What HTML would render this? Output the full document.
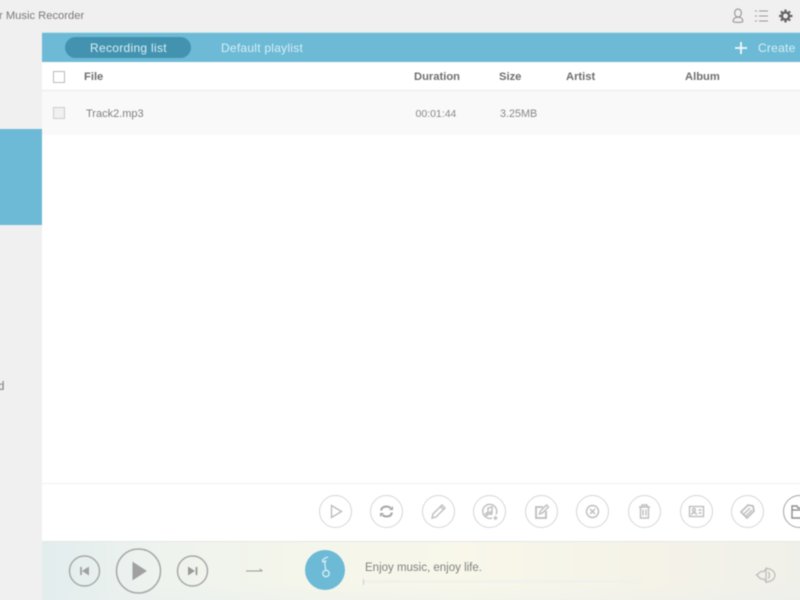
<!DOCTYPE html>
<html>
<head>
<meta charset="utf-8">
<style>
html,body{margin:0;padding:0;width:800px;height:600px;overflow:hidden;background:#fff}
body{position:relative;font-family:"Liberation Sans",sans-serif;color:#777}
#w{position:absolute;left:-10px;top:-10px;width:820px;height:620px;filter:blur(.45px)}
#i{position:absolute;left:10px;top:10px;width:800px;height:600px}
.a{position:absolute;white-space:nowrap;line-height:14px}
.b{font-weight:bold;font-size:11.2px;color:#6e6e6e}
.c{position:absolute;top:495px;width:31px;height:31px;border:1.3px solid #d6d6d6;border-radius:50%;box-sizing:content-box}
.c svg{position:absolute;left:0;top:0;width:31px;height:31px;fill:none;stroke:#bdbdbd;stroke-width:1.4}
</style>
</head>
<body>
<div id="w"><div id="i">
<div class="a" style="left:-10px;top:-10px;width:820px;height:43px;background:#f0f0f0"></div>
<div class="a" style="left:-10px;top:33px;width:52px;height:577px;background:#f0f0f0"></div>
<div class="a" style="left:-10px;top:129px;width:52px;height:96px;background:#6cbad5"></div>
<div class="a" style="left:-1px;top:9px;font-size:11.2px;color:#7a7a7a">r Music Recorder</div>
<div class="a" style="left:-2px;top:380px;font-size:11.5px;color:#777">d</div>

<svg class="a" style="left:728px;top:6px" width="66" height="20" viewBox="0 0 66 20" fill="none">
<ellipse cx="10" cy="7" rx="3.4" ry="4" stroke="#999" stroke-width="1.2"/>
<path d="M5.2 15.500c0-3 2-4.300 4.800-4.300s4.800 1.300 4.800 4.300c0 1.200-9.600 1.200-9.600 0z" stroke="#999" stroke-width="1.200"/>
<path d="M31 5h9M31 10h9M31 15h9" stroke="#999" stroke-width="1"/>
<path d="M27 5h2M27 10h2M27 15h2" stroke="#999" stroke-width="1"/>
<circle cx="57.500" cy="10" r="3.600" stroke="#666" stroke-width="2.400"/>
<path d="M57.500 3.500v2.500M57.500 14v2.500M51 10h2.500M62 10h2.500M52.900 5.400l1.800 1.800M60.300 12.800l1.800 1.800M52.900 14.600l1.800-1.800M60.300 7.200l1.800-1.800" stroke="#666" stroke-width="2.200"/>
</svg>

<div class="a" style="left:42px;top:32px;width:768px;height:1px;background:#c4e4ee"></div>
<div class="a" style="left:42px;top:33px;width:768px;height:29px;background:#6cbad5"></div>
<div class="a" style="left:65px;top:37px;width:126px;height:21px;border-radius:11px;background:#4393b0"></div>
<div class="a" style="left:90px;top:41px;font-size:12px;color:#d8eff6;letter-spacing:.3px">Recording list</div>
<div class="a" style="left:221px;top:41px;font-size:12px;color:#d8eff6;letter-spacing:.25px">Default playlist</div>
<svg class="a" style="left:735px;top:42px" width="12" height="12"><path d="M6 0v12M0 6h12" stroke="#f2fafc" stroke-width="1.800"/></svg>
<div class="a" style="left:758px;top:41px;font-size:12px;color:#d8eff6;letter-spacing:.25px">Create</div>

<div class="a" style="left:53px;top:71px;width:10px;height:10px;border:1px solid #bbb;background:#fff"></div>
<div class="a b" style="left:84px;top:70px">File</div>
<div class="a b" style="left:414px;top:70px">Duration</div>
<div class="a b" style="left:499px;top:70px">Size</div>
<div class="a b" style="left:566px;top:70px">Artist</div>
<div class="a b" style="left:685px;top:70px">Album</div>

<div class="a" style="left:42px;top:90px;width:768px;height:1px;background:#eaeaea"></div>
<div class="a" style="left:42px;top:91px;width:768px;height:44px;background:#f9f9f9"></div>
<div class="a" style="left:53px;top:107px;width:10px;height:10px;border:1px solid #ccc;background:#f0f0f0"></div>
<div class="a" style="left:86px;top:107px;font-size:11px;color:#808080">Track2.mp3</div>
<div class="a" style="left:415.500px;top:107px;font-size:10.500px;color:#888">00:01:44</div>
<div class="a" style="left:500px;top:107px;font-size:10.800px;color:#888">3.25MB</div>

<div class="a" style="left:42px;top:483px;width:768px;height:1px;background:#f2f2f2"></div>

<div class="c" style="left:319px"><svg viewBox="0 0 31 31"><path d="M11.500 9.500v12l10-6z"/></svg></div>
<div class="c" style="left:370px"><svg viewBox="0 0 31 31"><path d="M10 14.500c.5-2.500 2.500-4 5.500-4 1.500 0 3 .5 4 1.500M21 16.500c-.5 2.500-2.500 4-5.500 4-1.500 0-3-.5-4-1.500" stroke="#a5a5a5" stroke-width="2"/><path d="M18 14h4v-4zM13 17H9v4z" fill="#a5a5a5" stroke="none"/></svg></div>
<div class="c" style="left:422px"><svg viewBox="0 0 31 31"><path d="M10 18l9-9 3 3-9 9-4 1z M17.500 10.500l3 3"/></svg></div>
<div class="c" style="left:473px"><svg viewBox="0 0 31 31"><path d="M22 18.500a7 7 0 1 0-4 3.500"/><path d="M14 18v-6l4-1v6"/><circle cx="12.800" cy="18.200" r="1.200"/><circle cx="16.800" cy="17.200" r="1.200"/><path d="M21.500 20v4M19.500 22h4"/></svg></div>
<div class="c" style="left:525px"><svg viewBox="0 0 31 31"><path d="M20 15v7H10V11h7" stroke-width="1.800"/><path d="M13.500 18l1-3 6-6 2 2-6 6z"/></svg></div>
<div class="c" style="left:576px"><svg viewBox="0 0 31 31"><circle cx="15.500" cy="15.500" r="6"/><path d="M13 13l5 5M18 13l-5 5"/></svg></div>
<div class="c" style="left:628px"><svg viewBox="0 0 31 31"><path d="M10 11h11M13 11V9h5v2M11.500 11v11h8V11M14 13.500v6M17 13.500v6"/></svg></div>
<div class="c" style="left:680px"><svg viewBox="0 0 31 31"><rect x="8.500" y="10.500" width="14" height="10"/><circle cx="13" cy="14" r="1.500"/><path d="M10.500 19c0-3 5-3 5 0M17.500 14h3M17.500 17h3"/></svg></div>
<div class="c" style="left:731px"><svg viewBox="0 0 31 31"><path d="M9 16l7-7 5 1 1 5-7 7z" stroke-width="1.700"/><path d="M12 18l6-6M14 20l6-6"/></svg></div>
<div class="c" style="left:783px;border-color:#a5a5a5"><svg viewBox="0 0 31 31"><path d="M8 10h5l1 2h8v10H8z" stroke="#8d8d8d"/><path d="M8 14h14" stroke="#8d8d8d"/></svg></div>

<div class="a" style="left:42px;top:541px;width:768px;height:69px;background:linear-gradient(90deg,#e2edee 0%,#eef3ee 15%,#f5f6eb 35%,#f8f7ea 55%,#f5f3e8 80%,#f0f0ea 100%);border-top:1px solid #e6e6e6;box-sizing:border-box"></div>
<div class="a" style="left:42px;top:584px;width:768px;height:26px;background:linear-gradient(180deg,rgba(232,238,240,0),rgba(232,238,240,.55))"></div>

<svg class="a" style="left:60px;top:541px" width="160" height="59" viewBox="0 0 160 59" fill="none">
<circle cx="24.500" cy="30" r="15" stroke="#a8a8a8" stroke-width="1.500"/>
<path d="M21 26v8" stroke="#a0a0a0" stroke-width="1.800"/><path d="M29 25.500v9l-7-4.500z" fill="#a0a0a0"/>
<circle cx="78.500" cy="30" r="22" stroke="#a8a8a8" stroke-width="1.500"/>
<path d="M73 21.500v17l13-8.500z" fill="#a0a0a0" stroke="#a0a0a0"/>
<circle cx="132.500" cy="30" r="15" stroke="#a8a8a8" stroke-width="1.500"/>
<path d="M128 25.500v9l7-4.500z" fill="#999"/><path d="M136.500 26v8" stroke="#999" stroke-width="1.800"/>
</svg>
<svg class="a" style="left:245px;top:565px" width="20" height="10"><path d="M1 6h16M14.500 4l3 2" stroke="#999" stroke-width="1"/></svg>

<div class="a" style="left:305px;top:550px;width:40px;height:40px;border-radius:50%;background:#6cbad5"></div>
<svg class="a" style="left:305px;top:550px" width="40" height="40" fill="none"><path d="M23 7c-2 .5-4.500 2-5.500 3.500l.5 1.500 2.500-1c-1 2.500-.5 6 .5 9" stroke="#d7eef5" stroke-width="1.300"/><circle cx="21" cy="23.500" r="3.200" stroke="#d7eef5" stroke-width="1.400"/></svg>

<div class="a" style="left:365px;top:561px;font-size:11.500px;color:#808080">Enjoy music, enjoy life.</div>
<div class="a" style="left:363px;top:579px;width:1px;height:6px;background:#ccc"></div>
<div class="a" style="left:364px;top:580px;width:280px;height:3px;background:rgba(240,240,236,.8)"></div>

<svg class="a" style="left:755px;top:566px" width="22" height="18" fill="none"><path d="M1.500 9L6 5.500h3L11 2.500V16L9 13H6z" stroke="#bbb" stroke-width="1.200"/><path d="M11 2.500c5 0 9 3 9 6.750S16 16 11 16M13 6c2 1.500 2 5 0 6.500" stroke="#bbb" stroke-width="1.200"/></svg>
</div></div>
</body>
</html>
